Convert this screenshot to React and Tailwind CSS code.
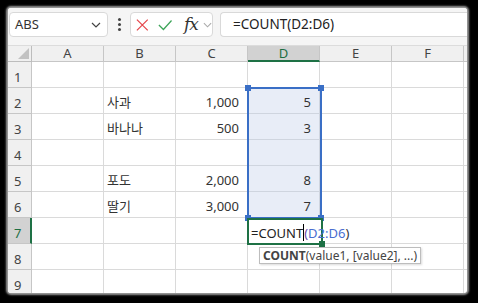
import React from "react";

const COLS = ["A", "B", "C", "D", "E", "F"];
const ROWS = [
  { n: 1 },
  { n: 2, B: "사과", C: "1,000", D: "5" },
  { n: 3, B: "바나나", C: "500", D: "3" },
  { n: 4 },
  { n: 5, B: "포도", C: "2,000", D: "8" },
  { n: 6, B: "딸기", C: "3,000", D: "7" },
  { n: 7 },
  { n: 8 },
  { n: 9 },
];

function Chevron({ className }) {
  return (
    <svg width="10" height="6" viewBox="0 0 10 6" className={className}>
      <path d="M1 1 L5 5 L9 1" fill="none" stroke="currentColor" strokeWidth="1.2" />
    </svg>
  );
}

export default function App() {
  return (
    <div className="w-[478px] h-[303px] bg-black pt-[8px] pl-[8px] font-['Noto_Sans','Noto_Sans_CJK_KR',sans-serif]">
      <div className="w-[459px] h-[285px] bg-white rounded-[3px] overflow-hidden shadow-[0_0_2px_2px_#9a9a9a] flex flex-col">
        {/* toolbar */}
        <div className="h-[37px] shrink-0 bg-[#f5f5f5] flex items-start pt-[4px]">
          <div className="ml-[1px] w-[99px] h-[25px] bg-white border border-[#d9d9d9] rounded-[4px] flex items-center justify-between pl-[5px] pr-[6px]">
            <span className="text-[13px] text-[#333] leading-none">ABS</span>
            <Chevron className="text-[#444]" />
          </div>
          <div className="w-[22px] h-[25px] flex items-center justify-center">
            <div className="flex flex-col gap-[2px]">
              <div className="w-[3px] h-[3px] bg-[#444] rounded-full" />
              <div className="w-[3px] h-[3px] bg-[#444] rounded-full" />
              <div className="w-[3px] h-[3px] bg-[#444] rounded-full" />
            </div>
          </div>
          <div className="w-[83px] h-[25px] bg-white border border-[#d9d9d9] rounded-[4px] flex items-center">
            <svg width="14" height="14" viewBox="0 0 14 14" className="ml-[5px]">
              <path d="M1 1 L13 13 M13 1 L1 13" stroke="#e5484d" strokeWidth="1.4" fill="none" />
            </svg>
            <svg width="16" height="12" viewBox="0 0 16 12" className="ml-[9px]">
              <path d="M1 6 L6 11 L15 1" stroke="#3ea55a" strokeWidth="1.4" fill="none" />
            </svg>
            <span className="ml-[12px] text-[17px] italic leading-none text-[#333] font-['DejaVu_Serif',serif] tracking-[-1px]">fx</span>
            <Chevron className="ml-[5px] text-[#aaa]" />
          </div>
          <div className="ml-[7px] flex-1 h-[25px] bg-white border border-r-0 border-[#d9d9d9] rounded-l-[4px] flex items-center pl-[12px]">
            <span className="text-[13.5px] text-[#222] leading-none">=COUNT(D2:D6)</span>
          </div>
        </div>

        {/* grid */}
        <div className="relative flex-1 flex flex-col text-[13px] text-[#333]">
          {/* header row */}
          <div className="flex h-[17px] shrink-0 bg-[#f0f0f0] border-t border-[#dcdcdc]">
            <div className="relative w-[24px] shrink-0 border-r border-b border-[#bdbdbd]">
              <svg width="11" height="11" viewBox="0 0 11 11" className="absolute left-[10px] top-[2px]">
                <path d="M11 0 L11 11 L0 11 Z" fill="#c2c2c2" />
              </svg>
            </div>
            {COLS.map((c) => (
              <div
                key={c}
                className={
                  c === "D"
                    ? "w-[72px] shrink-0 bg-[#d2d2d2] border-r border-[#c6c6c6] border-b-2 border-b-[#1e7145] flex items-center justify-center text-[#1e6e42] leading-none"
                    : "w-[72px] shrink-0 border-r border-b border-[#c6c6c6] flex items-center justify-center text-[#444] leading-none"
                }
              >
                {c}
              </div>
            ))}
            <div className="flex-1 border-b border-[#c6c6c6]" />
          </div>

          {ROWS.map((r) => (
            <div key={r.n} className="flex h-[26px] shrink-0">
              <div
                className={
                  r.n === 7
                    ? "w-[24px] shrink-0 bg-[#d2d2d2] border-r-2 border-r-[#1e7145] border-b border-[#c6c6c6] flex items-end pl-[6px] pb-[1px] text-[#1e6e42] leading-[18px]"
                    : "w-[24px] shrink-0 bg-[#f0f0f0] border-r border-b border-[#c6c6c6] flex items-end pl-[6px] pb-[1px] text-[#444] leading-[18px]"
                }
              >
                {r.n}
              </div>
              {COLS.map((c) => {
                const sel = c === "D" && r.n >= 2 && r.n <= 6;
                const right = c === "C" || c === "D";
                return (
                  <div
                    key={c}
                    className={
                      (sel ? "bg-[#e8edf7] border-[#cfd5df] " : "border-[#dadada] ") +
                      "w-[72px] shrink-0 border-r border-b flex items-end pb-[2px] leading-[18px] " +
                      (right ? "justify-end pr-[8px]" : "justify-start pl-[3px]")
                    }
                  >
                    {r[c] || ""}
                  </div>
                );
              })}
              <div className="flex-1 border-b border-[#dadada]" />
            </div>
          ))}

          {/* selection range D2:D6 */}
          <div className="absolute left-[239px] top-[42px] w-[75px] h-[132px] border-2 border-[#3a6fc6] pointer-events-none">
            <div className="absolute -left-[4px] -top-[4px] w-[6px] h-[6px] bg-[#3a6fc6]" />
            <div className="absolute -right-[4px] -top-[4px] w-[6px] h-[6px] bg-[#3a6fc6]" />
            <div className="absolute -left-[4px] -bottom-[4px] w-[6px] h-[6px] bg-[#3a6fc6]" />
            <div className="absolute -right-[4px] -bottom-[4px] w-[6px] h-[6px] bg-[#3a6fc6]" />
          </div>

          {/* active cell D7 */}
          <div className="absolute left-[239px] top-[173px] w-[76px] h-[27px] border-2 border-[#1e7145] bg-white">
            <div className="absolute left-[2px] bottom-[1px] whitespace-nowrap text-[13px] leading-[18px] text-[#222] flex items-end">
              <span>=COUNT</span>
              <span className="w-[1px] h-[17px] bg-black mb-[1px]" />
              <span className="text-[#6a4aa8]">(</span>
              <span className="text-[#4a6ed0]">D2:D6</span>
              <span className="text-[#333]">)</span>
            </div>
            <div className="absolute -right-[4px] -bottom-[4px] w-[6px] h-[6px] bg-[#1e7145]" />
          </div>

          {/* tooltip */}
          <div className="absolute left-[251px] top-[202px] h-[17px] px-[3px] bg-white border border-[#bdbdbd] shadow-[1px_1px_2px_rgba(0,0,0,0.15)] flex items-center whitespace-nowrap text-[12px] leading-none text-[#444]">
            <span className="font-bold">COUNT</span>
            <span>(value1, [value2], ...)</span>
          </div>
        </div>
      </div>
    </div>
  );
}
